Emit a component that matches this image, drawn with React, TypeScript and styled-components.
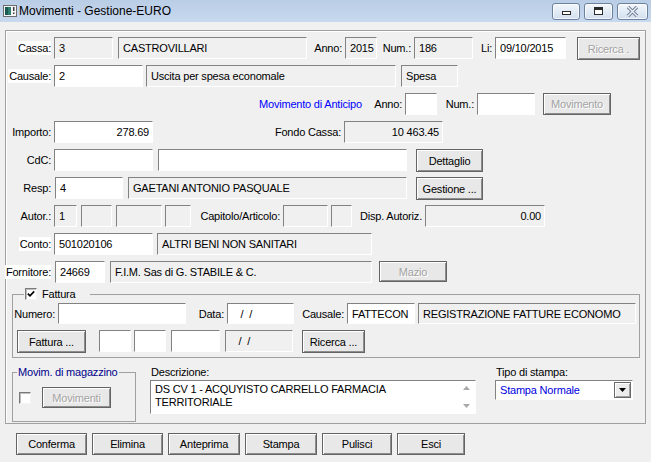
import React from 'react';
import styled, { createGlobalStyle } from 'styled-components';

const GlobalStyle = createGlobalStyle`
  html, body {
    margin: 0;
    padding: 0;
    background: #f0f0f0;
  }

  body {
    font-family: 'Liberation Sans', Arial, sans-serif;
    font-size: 11px;
    letter-spacing: -0.2px;
    color: #000;
  }

  * {
    box-sizing: border-box;
  }
`;

const Window = styled.div`
  width: 651px;
  height: 462px;
  overflow: hidden;
  background: #f0f0f0;
  display: flex;
  flex-direction: column;
`;

const TitleBar = styled.div`
  height: 22px;
  flex: none;
  display: flex;
  align-items: center;
  padding: 0 3px 0 3px;
  background: linear-gradient(#b9cde6, #c8d9ee);
  font-size: 12px;
  letter-spacing: 0;
`;

const TitleText = styled.span`
  margin-left: 2px;
`;

const CaptionGroup = styled.div`
  margin-left: auto;
  align-self: flex-start;
  margin-top: 3px;
  display: flex;
  gap: 4px;
`;

const CaptionButton = styled.div<{ $w: number }>`
  width: ${({ $w }) => $w}px;
  height: 17px;
  border: 1px solid #6c819d;
  border-radius: 3px;
  background: linear-gradient(#f3f7fc, #d2dfef);
  box-shadow: inset 0 0 0 1px rgba(255, 255, 255, 0.7);
  display: flex;
  align-items: center;
  justify-content: center;
`;

const Body = styled.div`
  flex: 1;
  padding: 8px 5px 0 5px;
  display: flex;
  flex-direction: column;
`;

const Panel = styled.div`
  height: 394px;
  flex: none;
  border: 1px solid #a0a0a0;
  box-shadow: inset 1px 1px 0 #fff;
  display: flex;
  flex-direction: column;
`;

const Row = styled.div<{ $mt?: number; $h?: number }>`
  flex: none;
  display: flex;
  align-items: flex-start;
  height: ${({ $h = 22 }) => $h}px;
  margin-top: ${({ $mt = 6 }) => $mt}px;
`;

const Label = styled.div<{ $w: number; $ml?: number; $left?: boolean; $color?: string }>`
  flex: none;
  width: ${({ $w }) => $w}px;
  margin-left: ${({ $ml = 0 }) => $ml}px;
  height: 100%;
  display: flex;
  align-items: center;
  justify-content: ${({ $left }) => ($left ? 'flex-start' : 'flex-end')};
  padding-right: ${({ $left }) => ($left ? 0 : 1)}px;
  color: ${({ $color = '#000' }) => $color};
  white-space: nowrap;
`;

const Tag = styled.span<{ $white?: boolean }>`
  line-height: 14px;
  padding-left: 1px;
  background: ${({ $white }) => ($white ? '#fff' : 'transparent')};
`;

const Field = styled.div<{ $w: number; $ml?: number; $white?: boolean; $right?: boolean; $h?: number }>`
  flex: none;
  width: ${({ $w }) => $w}px;
  height: ${({ $h = 22 }) => $h}px;
  margin-left: ${({ $ml = 0 }) => $ml}px;
  background: ${({ $white }) => ($white ? '#fff' : '#f0f0f0')};
  border: 1px solid;
  border-color: #828282 #fff #fff #828282;
  display: flex;
  align-items: center;
  justify-content: ${({ $right }) => ($right ? 'flex-end' : 'flex-start')};
  padding: 0 3px 0 4px;
  white-space: pre;
  overflow: hidden;
`;

const Button = styled.button<{ $w: number; $ml?: number; $h?: number; $disabled?: boolean }>`
  flex: none;
  width: ${({ $w }) => $w}px;
  height: ${({ $h = 23 }) => $h}px;
  margin: 0 0 0 ${({ $ml = 0 }) => $ml}px;
  padding: 0;
  font: inherit;
  letter-spacing: inherit;
  border: 1px solid #646464;
  background: #e8e8e8;
  box-shadow: inset 1px 1px 0 #fff, inset -1px -1px 0 #8e8e8e;
  color: ${({ $disabled }) => ($disabled ? '#a3a3a3' : '#000')};
  text-shadow: ${({ $disabled }) => ($disabled ? '1px 1px 0 #fff' : 'none')};
  display: flex;
  align-items: center;
  justify-content: center;
  white-space: nowrap;
`;

const GroupBox = styled.fieldset<{ $w: number; $h: number; $ml: number; $mt: number }>`
  flex: none;
  min-width: 0;
  width: ${({ $w }) => $w}px;
  height: ${({ $h }) => $h}px;
  margin: ${({ $mt }) => $mt}px 0 0 ${({ $ml }) => $ml}px;
  padding: 0;
  border: 1px solid #a0a0a0;
`;

const Legend = styled.legend<{ $ml: number; $pr?: number; $color?: string }>`
  margin-left: ${({ $ml }) => $ml}px;
  padding: 0 ${({ $pr = 1 }) => $pr}px 0 1px;
  height: 14px;
  line-height: 14px;
  white-space: nowrap;
  color: ${({ $color = '#000' }) => $color};
`;

const LegendInner = styled.span`
  display: inline-flex;
  align-items: center;
  gap: 5px;
  height: 14px;
`;

const CheckBox = styled.span<{ $ml?: number }>`
  flex: none;
  width: 12px;
  height: 12px;
  margin-left: ${({ $ml = 0 }) => $ml}px;
  background: #fff;
  border: 1px solid;
  border-color: #7a7a7a #f4f4f4 #f4f4f4 #7a7a7a;
  box-shadow: inset 1px 1px 0 #bdbdbd;
  display: inline-flex;
  align-items: center;
  justify-content: center;
`;

const BottomRow = styled.div`
  flex: none;
  display: flex;
  align-items: flex-start;
`;

const Column = styled.div<{ $ml: number; $w: number }>`
  flex: none;
  width: ${({ $w }) => $w}px;
  margin: 7px 0 0 ${({ $ml }) => $ml}px;
  display: flex;
  flex-direction: column;
`;

const ColumnLabel = styled.div`
  height: 14px;
  line-height: 14px;
  padding-left: 1px;
`;

const Memo = styled.div`
  margin-top: 1px;
  height: 34px;
  background: #fff;
  border: 1px solid;
  border-color: #828282 #fff #fff #828282;
  display: flex;
`;

const MemoText = styled.div`
  flex: 1;
  padding: 2px 4px;
  line-height: 13px;
`;

const ScrollStrip = styled.div`
  width: 17px;
  flex: none;
  display: flex;
  flex-direction: column;
  align-items: center;
  justify-content: space-between;
  padding: 5px 0 5px;
`;

const Combo = styled.div`
  margin-top: 1px;
  height: 20px;
  background: #fff;
  border: 1px solid;
  border-color: #828282 #fff #fff #828282;
  display: flex;
  align-items: center;
  padding-left: 4px;
  color: #0000e0;
`;

const ComboButton = styled.span`
  margin-left: auto;
  margin-right: 1px;
  width: 17px;
  height: 16px;
  border: 1px solid #6a6a6a;
  background: #ececec;
  box-shadow: inset 1px 1px 0 #fff, inset -1px -1px 0 #a0a0a0;
  display: flex;
  align-items: center;
  justify-content: center;
`;

const ButtonBar = styled.div`
  flex: none;
  display: flex;
  gap: 5px;
  margin-top: 9px;
  padding-left: 11px;
`;

const AppIcon = () => (
  <svg width='14' height='14' viewBox='0 0 14 14'>
    <rect x='0.5' y='1.5' width='13' height='11' fill='#f4f4f4' stroke='#6d6d6d' />
    <rect x='2' y='3' width='6' height='8' fill='#2f7d6f' />
    <rect x='2' y='3' width='3' height='8' fill='#1a5a52' />
    <rect x='10' y='3' width='1.5' height='4' fill='#3a3a3a' />
    <rect x='10' y='8.5' width='1.5' height='1.5' fill='#3a3a3a' />
  </svg>
);

const Glyph = {
  min: (
    <svg width='11' height='9' viewBox='0 0 11 9'>
      <rect x='1.5' y='4.5' width='8' height='3' fill='#fff' stroke='#2b2b2b' />
    </svg>
  ),
  max: (
    <svg width='11' height='9' viewBox='0 0 11 9'>
      <rect x='1.5' y='0.5' width='8' height='7' fill='#fff' stroke='#2b2b2b' />
      <rect x='2' y='1' width='7' height='2' fill='#2b2b2b' />
    </svg>
  ),
  close: (
    <svg width='13' height='11' viewBox='0 0 13 11'>
      <path d='M2 1 L11 10 M11 1 L2 10' stroke='#71819a' strokeWidth='3.4' />
      <path d='M2 1 L11 10 M11 1 L2 10' stroke='#eef2f8' strokeWidth='1.4' />
    </svg>
  ),
};

const Check = () => (
  <svg width='8' height='8' viewBox='0 0 8 8'>
    <path d='M0.8 3.6 L3 5.8 L7.2 1.4' fill='none' stroke='#000' strokeWidth='1.7' />
  </svg>
);

const Arrow = ({ up, color }: { up?: boolean; color: string }) => (
  <svg width='7' height='4' viewBox='0 0 7 4'>
    <path d={up ? 'M0 4 L3.5 0 L7 4 Z' : 'M0 0 L7 0 L3.5 4 Z'} fill={color} />
  </svg>
);

const App = () => {
  const actions = [
    { label: 'Conferma', w: 71 },
    { label: 'Elimina', w: 71 },
    { label: 'Anteprima', w: 72 },
    { label: 'Stampa', w: 72 },
    { label: 'Pulisci', w: 70 },
    { label: 'Esci', w: 68 },
  ];

  return (
    <Window>
      <GlobalStyle />
      <TitleBar>
        <AppIcon />
        <TitleText>Movimenti - Gestione-EURO</TitleText>
        <CaptionGroup>
          <CaptionButton $w={28}>{Glyph.min}</CaptionButton>
          <CaptionButton $w={29}>{Glyph.max}</CaptionButton>
          <CaptionButton $w={31}>{Glyph.close}</CaptionButton>
        </CaptionGroup>
      </TitleBar>

      <Body>
        <Panel>
          <Row>
            <Label $w={46}><Tag $white>Cassa:</Tag></Label>
            <Field $w={59} $ml={2}>3</Field>
            <Field $w={189} $ml={5}>CASTROVILLARI</Field>
            <Label $w={36}>Anno:</Label>
            <Field $w={32} $ml={2}>2015</Field>
            <Label $w={35}>Num.:</Label>
            <Field $w={59} $ml={2}>186</Field>
            <Label $w={20}>Li:</Label>
            <Field $w={71} $ml={2} $white>09/10/2015</Field>
            <Button $w={63} $ml={11} $disabled>Ricerca .</Button>
          </Row>

          <Row>
            <Label $w={46}><Tag $white>Causale:</Tag></Label>
            <Field $w={89} $ml={2} $white>2</Field>
            <Field $w={250} $ml={3}>Uscita per spesa economale</Field>
            <Field $w={57} $ml={5}>Spesa</Field>
          </Row>

          <Row>
            <Label $w={104} $ml={253} $left $color='#0000ff'>Movimento di Anticipo</Label>
            <Label $w={40}>Anno:</Label>
            <Field $w={32} $ml={2} $white />
            <Label $w={38}>Num.:</Label>
            <Field $w={58} $ml={2} $white />
            <Button $w={68} $ml={8} $h={22} $disabled>Movimento</Button>
          </Row>

          <Row>
            <Label $w={46}>Importo:</Label>
            <Field $w={99} $ml={2} $white $right>278.69</Field>
            <Label $w={189}>Fondo Cassa:</Label>
            <Field $w={99} $ml={2} $right>10 463.45</Field>
          </Row>

          <Row>
            <Label $w={46}>CdC:</Label>
            <Field $w={99} $ml={2} $white />
            <Field $w={249} $ml={5} $white />
            <Button $w={67} $ml={9}>Dettaglio</Button>
          </Row>

          <Row>
            <Label $w={46}>Resp:</Label>
            <Field $w={68} $ml={3} $white>4</Field>
            <Field $w={279} $ml={5}>GAETANI ANTONIO PASQUALE</Field>
            <Button $w={67} $ml={9}>Gestione ...</Button>
          </Row>

          <Row>
            <Label $w={46}>Autor.:</Label>
            <Field $w={23} $ml={2}>1</Field>
            <Field $w={31} $ml={4} />
            <Field $w={46} $ml={4} />
            <Field $w={26} $ml={3} />
            <Label $w={90}>Capitolo/Articolo:</Label>
            <Field $w={45} $ml={2} />
            <Field $w={21} $ml={3} />
            <Label $w={71}>Disp. Autoriz.</Label>
            <Field $w={120} $ml={2} $right>0.00</Field>
          </Row>

          <Row>
            <Label $w={46}><Tag $white>Conto:</Tag></Label>
            <Field $w={99} $ml={2} $white>501020106</Field>
            <Field $w={215} $ml={4}>ALTRI BENI NON SANITARI</Field>
          </Row>

          <Row>
            <Label $w={46}><Tag $white>Fornitore:</Tag></Label>
            <Field $w={50} $ml={3} $white>24669</Field>
            <Field $w={262} $ml={5}>F.I.M. Sas di G. STABILE &amp; C.</Field>
            <Button $w={68} $ml={7} $h={21} $disabled>Mazio</Button>
          </Row>

          <GroupBox $w={628} $h={71} $ml={6} $mt={4}>
            <Legend $ml={11} $pr={15}>
              <LegendInner>
                <CheckBox><Check /></CheckBox>
                Fattura
              </LegendInner>
            </Legend>
            <Row $mt={2} $h={21}>
              <Label $w={43}>Numero:</Label>
              <Field $w={128} $ml={2} $h={21} $white />
              <Label $w={39}>Data:</Label>
              <Field $w={67} $ml={2} $h={21} $white>{'   /  /'}</Field>
              <Label $w={51}>Causale:</Label>
              <Field $w={68} $ml={2} $h={21} $white>FATTECON</Field>
              <Field $w={218} $ml={3} $h={21}>REGISTRAZIONE FATTURE ECONOMO</Field>
            </Row>
            <Row $mt={6} $h={23}>
              <Button $w={69} $ml={4}>Fattura ...</Button>
              <Field $w={32} $ml={13} $white />
              <Field $w={32} $ml={3} $white />
              <Field $w={49} $ml={5} $white />
              <Field $w={68} $ml={5}>{'   /  /'}</Field>
              <Button $w={63} $ml={9}>Ricerca ...</Button>
            </Row>
          </GroupBox>

          <BottomRow>
            <GroupBox $w={124} $h={57} $ml={6} $mt={7}>
              <Legend $ml={4} $color='#00008b'>Movim. di magazzino</Legend>
              <Row $mt={8} $h={21}>
                <Label $w={18} $left>
                  <CheckBox $ml={6} />
                </Label>
                <Button $w={69} $ml={11} $h={21} $disabled>Movimenti</Button>
              </Row>
            </GroupBox>

            <Column $ml={14} $w={326}>
              <ColumnLabel>Descrizione:</ColumnLabel>
              <Memo>
                <MemoText>
                  DS CV 1 - ACQUYISTO CARRELLO FARMACIA
                  <br />
                  TERRITORIALE
                </MemoText>
                <ScrollStrip>
                  <Arrow up color='#a8a8a8' />
                  <Arrow color='#a8a8a8' />
                </ScrollStrip>
              </Memo>
            </Column>

            <Column $ml={19} $w={138}>
              <ColumnLabel>Tipo di stampa:</ColumnLabel>
              <Combo>
                Stampa Normale
                <ComboButton>
                  <Arrow color='#000' />
                </ComboButton>
              </Combo>
            </Column>
          </BottomRow>
        </Panel>

        <ButtonBar>
          {actions.map((a) => (
            <Button key={a.label} $w={a.w} $h={22}>
              {a.label}
            </Button>
          ))}
        </ButtonBar>
      </Body>
    </Window>
  );
};

export default App;
